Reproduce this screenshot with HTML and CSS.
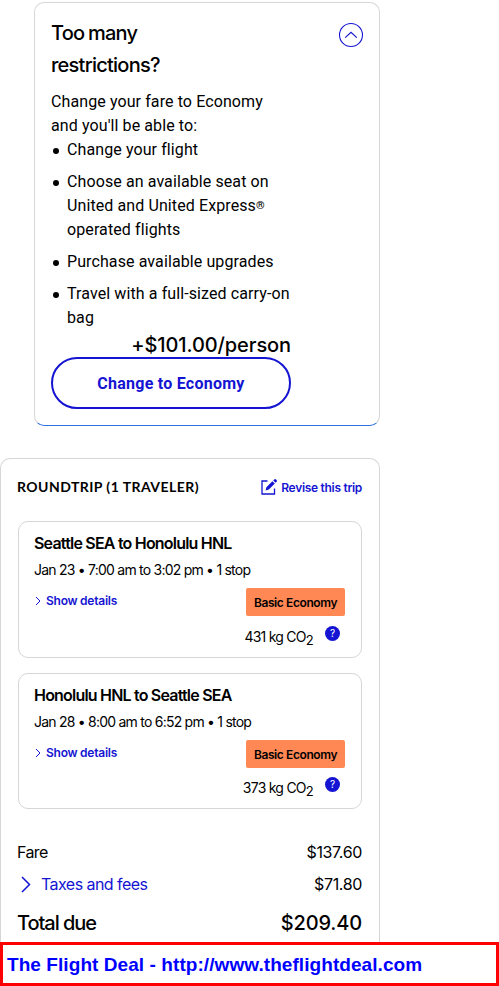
FILE: index.html
```html
<!DOCTYPE html>
<html lang="en">
<head>
    <meta charset="UTF-8">
    <title>Trip summary</title>
    <link rel="stylesheet" href="styles.css">
</head>
<body>
    <div class="upsell">
        <div class="upsell-head">
            <h2>Too many<br>restrictions?</h2>
            <svg class="toggle" width="26" height="26" viewBox="0 0 26 26" fill="none" stroke="#1414d2">
                <circle cx="13" cy="13" r="11.5" stroke-width="1.1"/>
                <path d="M7.2 15.6L13 10.2l5.8 5.4" stroke-width="1.2"/>
            </svg>
        </div>
        <p class="intro">Change your fare to Economy<br>and you'll be able to:</p>
        <ul>
            <li>Change your flight</li>
            <li>Choose an available seat on<br>United and United Express<span class="reg">®</span><br>operated flights</li>
            <li>Purchase available upgrades</li>
            <li class="bag">Travel with a full-sized carry-on<br>bag</li>
        </ul>
        <div class="price">+$101.00/person</div>
        <a class="change">Change to Economy</a>
    </div>

    <div class="trip">
        <div class="trip-head">
            <h3>ROUNDTRIP (1 TRAVELER)</h3>
            <a class="revise">
                <svg width="18" height="18" viewBox="0 0 18 18">
                    <path d="M7.5 3H2v13h12.5v-5.5" fill="none" stroke="#1414d2" stroke-width="1.3"/>
                    <path d="M5.6 12.4l.8-3.2 6-6 2.4 2.4-6 6zM13.2 2.4l1-1a1.3 1.3 0 0 1 1.8 0l.6.6a1.3 1.3 0 0 1 0 1.8l-1 1z" fill="#1414d2"/>
                </svg>
                <span>Revise this trip</span>
            </a>
        </div>

        <div class="leg">
            <h4>Seattle SEA to Honolulu HNL</h4>
            <p class="time">Jan 23 • 7:00 am to 3:02 pm • 1 stop</p>
            <div class="leg-row">
                <a class="details">
                    <svg width="6" height="10" viewBox="0 0 6 10" fill="none" stroke="#1414d2"><path d="M1 1l4 4-4 4"/></svg>
                    <span>Show details</span>
                </a>
                <span class="fare-class">Basic Economy</span>
            </div>
            <div class="co2">
                <span class="kg">431 kg CO<sub>2</sub></span>
                <span class="help">?</span>
            </div>
        </div>

        <div class="leg back">
            <h4>Honolulu HNL to Seattle SEA</h4>
            <p class="time">Jan 28 • 8:00 am to 6:52 pm • 1 stop</p>
            <div class="leg-row">
                <a class="details">
                    <svg width="6" height="10" viewBox="0 0 6 10" fill="none" stroke="#1414d2"><path d="M1 1l4 4-4 4"/></svg>
                    <span>Show details</span>
                </a>
                <span class="fare-class">Basic Economy</span>
            </div>
            <div class="co2">
                <span class="kg">373 kg CO<sub>2</sub></span>
                <span class="help">?</span>
            </div>
        </div>

        <div class="row"><span class="label">Fare</span><span class="amount">$137.60</span></div>
        <div class="row">
            <a class="taxes">
                <svg width="10" height="17" viewBox="0 0 10 17" fill="none" stroke="#1414d2" stroke-width="1.5"><path d="M1 1l7.5 7.5L1 16"/></svg>
                <span>Taxes and fees</span>
            </a>
            <span class="amount">$71.80</span>
        </div>
        <div class="row total"><span class="label">Total due</span><span class="amount">$209.40</span></div>
    </div>

    <div class="banner">The Flight Deal - http://www.theflightdeal.com</div>
</body>
</html>
```

FILE: styles.css
```css
*{
    padding: 0;
    margin: 0;
    box-sizing: border-box;
}
body{
    width: 499px;
    height: 986px;
    padding-top: 2px;
    overflow: hidden;
    background-color: #fff;
    color: #000;
    font-family: Inter, "Liberation Sans", sans-serif;
    font-size: 16px;
    white-space: nowrap;
}
ul,li{
    list-style: none;
}
svg{
    display: block;
    flex: none;
}
.upsell{
    width: 346px;
    height: 424px;
    margin-left: 34px;
    padding: 14px 16px 0;
    border: 1px solid #d6d6d6;
    border-bottom-color: #2f70e0;
    border-radius: 10px;
}
.upsell-head{
    display: flex;
    justify-content: space-between;
    height: 73px;
}
.upsell-head h2{
    font-size: 20px;
    font-weight: 500;
    line-height: 32px;
    letter-spacing: -0.75px;
    word-spacing: -1px;
}
.toggle{
    margin: 5px -1px 0 0;
}
.intro,
.upsell li{
    font-family: Roboto, sans-serif;
    font-weight: 400;
    line-height: 24px;
    letter-spacing: 0.1px;
}
.upsell li{
    position: relative;
    padding-left: 16px;
    margin-bottom: 8px;
}
.upsell li:before{
    content: "";
    position: absolute;
    left: 2px;
    top: 10px;
    width: 6px;
    height: 6px;
    border-radius: 50%;
    background-color: #000;
}
.upsell .bag{
    margin-bottom: 0;
}
.reg{
    font-size: 11px;
    font-weight: 700;
    line-height: 1;
    vertical-align: 2px;
}
.price{
    width: 240px;
    height: 27px;
    line-height: 30px;
    text-align: right;
    font-size: 20px;
    font-weight: 500;
    letter-spacing: -0.1px;
}
.change{
    display: block;
    width: 240px;
    height: 52px;
    border: 2px solid #1414d2;
    border-radius: 26px;
    line-height: 49px;
    text-align: center;
    color: #1414d2;
    font-family: Roboto, sans-serif;
    font-weight: 700;
    letter-spacing: 0.25px;
}
.trip{
    width: 380px;
    height: 484px;
    margin-top: 32px;
    padding: 0 17px 0 16px;
    border: 1px solid #d6d6d6;
    border-bottom: 0;
    border-radius: 10px 10px 0 0;
}
.trip-head{
    display: flex;
    justify-content: space-between;
    height: 62px;
    padding-top: 18px;
}
.trip-head h3{
    font-family: Lato, sans-serif;
    font-size: 14px;
    font-weight: 700;
    line-height: 20px;
    letter-spacing: 0.45px;
}
.revise{
    display: flex;
    gap: 3px;
    line-height: 22px;
    color: #1414d2;
    font-size: 12px;
    font-weight: 600;
    letter-spacing: -0.3px;
}
.revise svg{
    margin-top: 1px;
}
.leg{
    width: 344px;
    height: 137px;
    margin-left: 1px;
    padding: 9px 16px 0 15px;
    border: 1px solid #d6d6d6;
    border-radius: 10px;
}
.leg.back{
    height: 136px;
    margin-top: 15px;
    margin-bottom: 27px;
}
.leg h4{
    font-size: 16px;
    font-weight: 600;
    line-height: 24px;
    letter-spacing: -0.8px;
}
.time{
    line-height: 30px;
    font-size: 14px;
    letter-spacing: -0.77px;
}
.leg-row{
    display: flex;
    justify-content: space-between;
    height: 31px;
    padding-top: 3px;
}
.details{
    display: flex;
    align-items: center;
    gap: 5px;
    height: 25px;
    padding-left: 1px;
    color: #1414d2;
    font-size: 12px;
    font-weight: 600;
    letter-spacing: -0.25px;
}
.fare-class{
    width: 99px;
    height: 28px;
    border-radius: 2px;
    background-color: #ff8855;
    line-height: 30px;
    text-align: center;
    font-size: 12px;
    font-weight: 600;
    letter-spacing: -0.4px;
}
.co2{
    display: flex;
    justify-content: flex-end;
    gap: 12px;
    padding: 9px 5px 0 0;
    line-height: 24px;
    font-size: 14px;
    letter-spacing: -0.75px;
}
.back .co2{
    padding-top: 8px;
}
.co2 sub{
    font-size: 13px;
    line-height: 1;
    vertical-align: -3px;
}
.help{
    width: 15px;
    height: 15px;
    margin-top: 1px;
    border-radius: 50%;
    background-color: #1414d2;
    color: #fff;
    font-size: 10px;
    line-height: 15px;
    text-align: center;
    letter-spacing: 0;
}
.row{
    display: flex;
    justify-content: space-between;
    line-height: 32px;
    letter-spacing: -0.6px;
}
.amount{
    letter-spacing: -0.35px;
}
.taxes{
    display: flex;
    align-items: center;
    gap: 10px;
    padding-left: 4px;
    color: #1414d2;
    letter-spacing: -0.55px;
}
.total{
    padding-top: 7px;
    font-size: 20px;
    font-weight: 500;
    letter-spacing: -1.05px;
}
.total .amount{
    letter-spacing: -0.15px;
}
.banner{
    height: 44px;
    padding-left: 4px;
    border: 3px solid #f00;
    background-color: #fff;
    color: #00f;
    font-family: "Liberation Sans", Arial, sans-serif;
    font-size: 19px;
    font-weight: 700;
    line-height: 39px;
    letter-spacing: 0.07px;
}
```
